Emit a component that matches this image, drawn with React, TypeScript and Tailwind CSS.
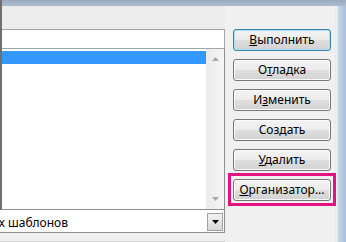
import React from 'react';

const font = { fontFamily: '"Noto Sans", "Open Sans", sans-serif' };

// plain Win7-style push button
const Btn: React.FC<{ children: React.ReactNode; focused?: boolean; highlight?: boolean }> = ({ children, focused, highlight }) => (
    <div
        className={`relative h-[22px] w-[98px] rounded-[3px] border flex items-center justify-center text-[12px] text-black bg-[linear-gradient(#f3f3f3,#ececec_48%,#dedede_52%,#d2d2d2)] ${
            focused ? 'border-[#3c82b0] shadow-[inset_0_0_0_1px_#a3e2f7]' : 'border-[#767676] shadow-[inset_0_0_0_1px_#fbfbfb]'
        }`}
    >
        <span className="leading-none pb-[1px]">{children}</span>
        {highlight && <span className="absolute -left-[6px] -right-[6px] -top-[7px] -bottom-[6px] border-[3px] border-[#e2127e]" />}
    </div>
);

const Arrow: React.FC<{ up?: boolean; color?: string }> = ({ up, color = '#a8a8a8' }) => (
    <svg width="7" height="4" viewBox="0 0 7 4">
        <path d={up ? 'M0 4 L3.5 0 L7 4 Z' : 'M0 0 L7 0 L3.5 4 Z'} fill={color} />
    </svg>
);

const App: React.FC = () => {
    return (
        <div className="w-[346px] h-[242px] bg-[#f0f0f0] flex flex-col overflow-hidden" style={font}>
            {/* window top edge */}
            <div className="h-[6px] bg-[linear-gradient(#97a9be,#aebdcd)] border-l-2 border-[#6f6f6f]" />
            <div className="flex flex-1">
                {/* left: name field, list, combo */}
                <div className="w-[225px] flex flex-col">
                    <div className="flex flex-col border-l-2 border-[#6f6f6f]">
                        <div className="h-[23px] bg-[#ececec]" />
                        <div className="h-[20px] bg-white border-y border-r border-[#a5a5a5]" />
                        <div className="h-[161px] bg-white border-b border-r border-[#8e8f8f] flex">
                            <div className="flex-1 pt-[2px]">
                                <div className="h-[13px] bg-[#3399ff]" />
                            </div>
                            <div className="w-[18px] bg-[linear-gradient(90deg,#eaeaea,#f6f6f6)] flex flex-col items-center justify-between py-[8px]">
                                <Arrow up />
                                <Arrow />
                            </div>
                        </div>
                    </div>
                    <div className="h-[23px] bg-white border-b border-r border-[#8e8f8f] flex items-center">
                        <div className="w-[68px] pt-[3px] overflow-hidden flex justify-end whitespace-nowrap text-[12px] text-black">
                            Всех активных шаблонов
                        </div>
                        <div className="ml-auto mr-[1px] mt-[2px] w-[16px] h-[18px] border border-[#a0a0a0] bg-[linear-gradient(#f2f2f2,#d8d8d8)] flex items-center justify-center">
                            <Arrow color="#000000" />
                        </div>
                    </div>
                    <div className="flex-1 border-b border-[#d0d0d0]" />
                </div>

                {/* buttons */}
                <div className="ml-[8px] pt-[23px] flex flex-col gap-[8px]">
                    <Btn focused><u>В</u>ыполнить</Btn>
                    <Btn>О<u>т</u>ладка</Btn>
                    <Btn>И<u>з</u>менить</Btn>
                    <Btn>Соз<u>д</u>ать</Btn>
                    <Btn><u>У</u>далить</Btn>
                    <Btn highlight><u>О</u>рганизатор...</Btn>
                </div>

                {/* right window frame */}
                <div className="ml-auto flex">
                    <div className="w-[3px] bg-[#e4ebf3]" />
                    <div className="w-[8px] bg-[linear-gradient(90deg,#c4d4e6,#a9bfd8)]" />
                </div>
            </div>
        </div>
    );
};

export default App;
